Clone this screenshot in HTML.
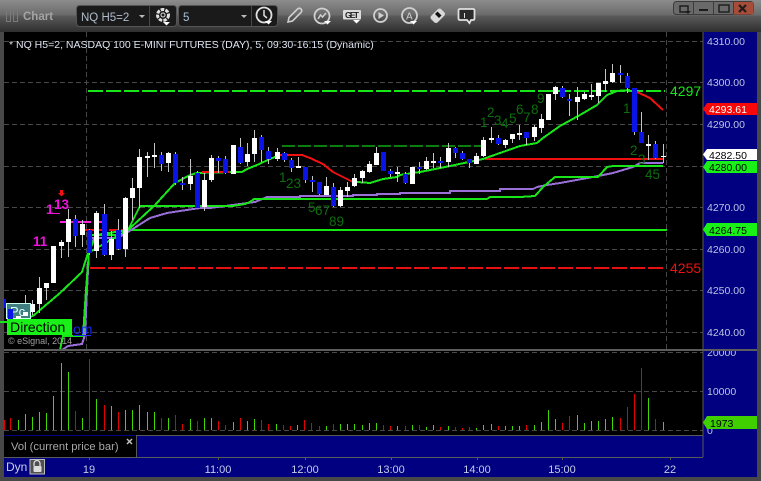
<!DOCTYPE html>
<html><head><meta charset="utf-8"><style>html,body{margin:0;padding:0;background:#444;width:761px;height:481px;overflow:hidden}svg{display:block;font-family:"Liberation Sans",sans-serif}</style></head><body>
<svg width="761" height="481" viewBox="0 0 761 481" xmlns="http://www.w3.org/2000/svg">
<defs><linearGradient id="h" x1="0" y1="0" x2="0" y2="1"><stop offset="0" stop-color="#8c8c8c"/><stop offset=".47" stop-color="#6a6a6a"/><stop offset=".5" stop-color="#5a5a5a"/><stop offset="1" stop-color="#2e2e2e"/></linearGradient></defs>
<rect width="761" height="481" fill="#484848"/>
<rect width="761" height="32" fill="url(#h)"/>
<rect x="4" y="32" width="699" height="317" fill="#000"/>
<rect x="703" y="32" width="54" height="445" fill="#000080"/>
<rect x="4" y="351" width="699" height="84" fill="#000"/>
<rect x="4" y="435" width="699" height="42" fill="#000080"/>
<rect x="4" y="436" width="132" height="21" fill="#000"/>
<!-- grid -->
<path d="M4 41.5H703M4 82.5H703M4 124.5H703M4 166.5H703M4 207.5H703M4 249.5H703M4 290.5H703M4 332.5H703M4 352.5H703M4 391.5H703M4 430.5H703M86.5 32V349M666.5 32V349" stroke="#484848" stroke-dasharray="5 3" fill="none"/>
<!-- lines -->
<g fill="none" shape-rendering="crispEdges">
<path d="M88 91H665" stroke="#19e619" stroke-width="2" stroke-dasharray="15 3"/>
<path d="M282 146H483" stroke="#0a800a" stroke-width="2" stroke-dasharray="13 3"/>
<path d="M90 268H665" stroke="#e81010" stroke-width="2" stroke-dasharray="15 3"/>
<path d="M128 230H667" stroke="#14e614" stroke-width="2"/>
<path d="M485 159H663" stroke="#f01010" stroke-width="2"/>
<path d="M60 222H102" stroke="#ff20e0" stroke-width="2" stroke-dasharray="14 3"/>
<path d="M85 230H130M92 238H100" stroke="#f01010" stroke-width="2" stroke-dasharray="9 3"/>
<path d="M90 235H117" stroke="#14e614" stroke-width="2"/>
<path d="M62 350L68 346L82 344L85 335L87 290L89 250L92 238H118L128 232L150 218L167 213L180 211L200 208H210L225 206L240 204L255 202L267 197H300V196H353V195H377V194H400V193H450V191H500V189H533L537 187L547 185L560 183L593 177L613 173L633 167L640 163H663" stroke="#9a70d8" stroke-width="2"/>
<path d="M60 350L63 336H83L86 290L89 252L96 235L128 230L140 206H197H233L245 204L250 202L254 199H487L490 197H520L535 196L543 187L555 177H598L607 167L613 166H663" stroke="#18e618" stroke-width="2"/>
<path d="M0 322H10L33 316L60 293L82 272L88 253L128 230L155 205L175 183L190 175L197 173L233 172L242 172L247 169L257 165L270 159L280 155H302L310 158L323 164L333 172L347 179L353 182L357 182L370 183L383 179L397 177L400 175L420 172L450 166L483 159L500 153L520 146L537 143L543 138L560 126L580 115L597 105L607 95L617 91L630 90" stroke="#18e618" stroke-width="2"/>
<path d="M202 172H230M280 155H302L310 158L323 164L333 172L347 179L353 182M637 92L650 98L663 110" stroke="#f01010" stroke-width="2"/>
</g>
<!-- wicks -->
<path fill="none" stroke="#c4c4c4" d="M18.5 308V330M25.5 295V320M32.5 300V315M39.5 277V313M46.5 283V300M53.5 246V283M61.5 240V258M68.5 209V257M75.5 215V247M82.5 220V247M89.5 229V255M96.5 211V258M104.5 204V256M111.5 231V260M118.5 219V250M125.5 197V257M132.5 178V220M139.5 149V208M147.5 152V177M154.5 143V168M161.5 152V171M168.5 152V172M175.5 152V185M182.5 177V190M190.5 159V190M197.5 171V208M204.5 173V211M211.5 155V182M218.5 156V173M225.5 156V174M233.5 145V174M240.5 138V164M247.5 143V166M254.5 130V162M261.5 135V162M268.5 147V164M277.5 148V161M284.5 152V162M291.5 158V172M298.5 157V168M305.5 167V183M312.5 176V192M319.5 182V195M326.5 177V195M333.5 183V207M340.5 187V207M347.5 182V197M354.5 174V187M362.5 170V183M369.5 161V173M376.5 147V165M383.5 152V171M390.5 169V177M397.5 167V182M405.5 172V184M412.5 167V184M419.5 162V174M426.5 157V170M433.5 153V168M440.5 157V168M448.5 143V167M455.5 147V158M462.5 151V160M469.5 159V168M476.5 153V164M483.5 137V157M491.5 127V143M498.5 135V145M505.5 139V148M512.5 134V143M519.5 125V140M526.5 132V145M534.5 125V141M541.5 114V133M548.5 94V120M555.5 86V100M562.5 86V98M569.5 94V116M577.5 87V120M584.5 92V100M591.5 84V100M598.5 83V103M605.5 69V92M612.5 64V83M620.5 65V83M627.5 73V93M634.5 88V135M641.5 112V143M648.5 135V160M655.5 141V159M663.5 144V163"/>
<!-- white bodies -->
<path fill="#fff" d="M16 316h5v6h-5zM23 312h5v4h-5zM30 304h5v8h-5zM37 288h5v16h-5zM44 283h5v5h-5zM51 246h5v37h-5zM59 242h5v4h-5zM66 219h5v23h-5zM80 224h5v11h-5zM94 213h5v38h-5zM109 239h5v16h-5zM123 198h5v51h-5zM130 188h5v10h-5zM137 157h5v31h-5zM145 156h5v2h-5zM152 155h5v2h-5zM166 153h5v10h-5zM188 176h5v8h-5zM202 180h5v27h-5zM209 158h5v22h-5zM231 145h5v29h-5zM245 154h5v8h-5zM252 138h5v16h-5zM275 152h5v7h-5zM296 166h5v2h-5zM324 186h5v9h-5zM338 190h5v16h-5zM345 187h5v4h-5zM352 178h5v8h-5zM360 171h5v7h-5zM367 164h5v8h-5zM374 153h5v12h-5zM395 172h5v2h-5zM410 167h5v17h-5zM424 161h5v8h-5zM431 161h5v2h-5zM446 148h5v14h-5zM474 156h5v8h-5zM481 140h5v16h-5zM489 138h5v2h-5zM503 140h5v5h-5zM510 134h5v5h-5zM517 133h5v2h-5zM532 127h5v10h-5zM539 119h5v9h-5zM546 94h5v26h-5zM553 87h5v7h-5zM575 97h5v5h-5zM582 94h5v5h-5zM589 95h5v2h-5zM596 83h5v13h-5zM603 81h5v3h-5zM610 73h5v9h-5zM646 144h5v2h-5zM661 156h5v1h-5z"/>
<!-- blue bodies -->
<path fill="#0a14e6" d="M4 299h2v9h-2zM8 308h5v14h-5zM73 219h5v17h-5zM87 230h5v23h-5zM102 214h5v41h-5zM116 230h5v19h-5zM159 155h5v9h-5zM173 154h5v29h-5zM180 183h5v2h-5zM195 173h5v35h-5zM216 158h5v3h-5zM223 159h5v14h-5zM238 147h5v16h-5zM259 137h5v13h-5zM266 151h5v8h-5zM282 153h5v7h-5zM289 160h5v8h-5zM303 167h5v13h-5zM310 180h5v2h-5zM317 182h5v12h-5zM331 187h5v19h-5zM381 152h5v19h-5zM388 171h5v3h-5zM403 174h5v9h-5zM417 167h5v2h-5zM438 161h5v2h-5zM453 148h5v5h-5zM460 153h5v6h-5zM467 159h5v4h-5zM496 138h5v6h-5zM524 132h5v6h-5zM560 88h5v9h-5zM567 99h5v2h-5zM618 73h5v2h-5zM625 76h5v12h-5zM632 88h5v44h-5zM639 132h5v11h-5zM653 144h5v14h-5z"/>
<!-- sequence numbers -->
<g fill="#0c6e0c" font-size="13.5">
<text x="279" y="182">1</text><text x="286" y="188">23</text><text x="308" y="212">5</text><text x="315" y="215">67</text><text x="329" y="226">89</text>
<text x="480" y="127">1</text><text x="487" y="117">2</text><text x="494" y="125">3</text><text x="501" y="128">4</text><text x="509" y="123">5</text><text x="516" y="114">6</text><text x="523" y="122">7</text><text x="531" y="114">8</text><text x="537" y="103">9</text>
<text x="623" y="113">1</text><text x="630" y="155">2</text><text x="638" y="164">3</text><text x="645" y="179">45</text>
</g>
<g fill="#f010e0" font-size="13.5" font-weight="bold"><text x="46" y="214">1</text><text x="54" y="209">13</text><text x="33" y="246">11</text></g>
<path d="M53 213.500H60" stroke="#f010e0"/>
<path d="M60 190h3v3h2l-3.500 3.500l-3.500-3.500h2z" fill="#f01010"/>
<text x="670" y="96" fill="#18e618" font-size="14">4297</text>
<text x="670" y="273" fill="#f01010" font-size="14">4255</text>
<text x="9" y="48" fill="#dde4f0" font-size="10.5">* NQ H5=2, NASDAQ 100 E-MINI FUTURES (DAY), 5, 09:30-16:15 (Dynamic)</text>
<!-- overlay left -->
<rect x="6.500" y="303.500" width="24" height="15" fill="#3f7f80" stroke="#cfe" stroke-width="1"/>
<text x="10" y="316" fill="#dff" font-size="13">Pc</text>
<rect x="8" y="309" width="5" height="13" fill="#0a14e6"/><rect x="16" y="316" width="5" height="6" fill="#fff"/><rect x="23" y="312" width="5" height="4" fill="#fff"/>
<rect x="7" y="319" width="65" height="16" fill="#18f018"/>
<text x="10" y="332" fill="#000" font-size="14">Direction</text>
<text x="73" y="334" fill="#1a28f0" font-size="14">om</text><path d="M73 335.500H91" stroke="#1a28f0"/>
<text x="8" y="344" fill="#a0a0a0" font-size="9">© eSignal, 2014</text>
<!-- price axis -->
<path d="M703 32V457" stroke="#5a5a5a" stroke-width="1"/>
<g fill="#bcc4e4" font-size="10.500"><text x="707" y="45">4310.00</text><text x="707" y="86">4300.00</text><text x="707" y="128">4290.00</text><text x="707" y="211">4270.00</text><text x="707" y="253">4260.00</text><text x="707" y="294">4250.00</text><text x="707" y="336">4240.00</text><text x="707" y="356">20000</text><text x="707" y="395">10000</text><text x="707" y="434">0</text></g>
<path d="M703 109l4-6h50v12h-50z" fill="#f80808"/><text x="709" y="113" fill="#fff" font-size="10.500">4293.61</text>
<path d="M703 154.500l4-5.500h50v11h-50z" fill="#fff"/><text x="709" y="159" fill="#000" font-size="10.500">4282.50</text>
<path d="M703 167l4-6h50v12h-50z" fill="#18f018"/><text x="709" y="171" fill="#000" font-size="10.500">4280.00</text>
<path d="M703 229.500l4-6.500h50v13h-50z" fill="#18f018"/><text x="709" y="234" fill="#000" font-size="10.500">4264.75</text>
<path d="M703 422.500l4-6.500h50v13h-50z" fill="#40d000"/><text x="710" y="427" fill="#000" font-size="10.500">1973</text>
<!-- vol bars -->
<path fill="none" stroke="#40d800" d="M18.500 430V420M25.500 430V414M32.500 430V417M39.500 430V412M46.500 430V413M53.500 430V396M61.500 430V363M68.500 430V372M82.500 430V418M96.500 430V399M111.500 430V406M125.500 430V410M132.500 430V410M139.500 430V405M147.500 430V412M154.500 430V412M168.500 430V418M190.500 430V419M204.500 430V418M211.500 430V418M233.500 430V422M247.500 430V421M254.500 430V419M276.500 430V424M297.500 430V425M326.500 430V426M340.500 430V424M347.500 430V424M354.500 430V424M362.500 430V425M369.500 430V423M376.500 430V423M397.500 430V426M412.500 430V425M426.500 430V427M433.500 430V425M448.500 430V426M476.500 430V428M483.500 430V425M491.500 430V424M505.500 430V426M512.500 430V426M519.500 430V426M534.500 430V425M541.500 430V422M548.500 430V410M555.500 430V419M577.500 430V415M584.500 430V423M591.500 430V421M598.500 430V421M605.500 430V419M612.500 430V417M648.500 430V398M663.500 430V422"/>
<path fill="none" stroke="#e00000" d="M4.500 430V420M10.500 430V418M75.500 430V411M89.500 430V359M104.500 430V405M118.500 430V412M161.500 430V418M175.500 430V415M182.500 430V424M197.500 430V421M218.500 430V421M225.500 430V425M240.500 430V418M261.500 430V420M268.500 430V424M283.500 430V425M290.500 430V426M304.500 430V420M311.500 430V423M319.500 430V426M333.500 430V424M383.500 430V425M390.500 430V426M405.500 430V426M419.500 430V425M440.500 430V427M455.500 430V427M462.500 430V428M469.500 430V427M498.500 430V426M526.500 430V425M562.500 430V423M569.500 430V416M620.500 430V418M627.500 430V407M634.500 430V394M641.500 430V368M655.500 430V419"/>
<!-- separators -->
<rect x="4" y="349" width="753" height="2" fill="#5c5c5c"/>
<path d="M136 435.500H703M4 457.500H703M136.500 436V457M89.500 457V460M218.500 457V460M305.500 457V460M391.500 457V460M477.500 457V460M562.500 457V460M670.500 457V460" stroke="#5a5a5a" fill="none"/>
<text x="11" y="450" fill="#a8a8a8" font-size="11.200">Vol (current price bar)</text>
<path d="M127 439l5 5M132 439l-5 5" stroke="#c0c0c0" stroke-width="1.500"/>
<g fill="#c4cce8" font-size="11" text-anchor="middle"><text x="89" y="473">19</text><text x="218" y="473">11:00</text><text x="305" y="473">12:00</text><text x="391" y="473">13:00</text><text x="477" y="473">14:00</text><text x="562" y="473">15:00</text><text x="670" y="473">22</text></g>
<text x="6" y="471" fill="#c8d0e8" font-size="12">Dyn</text>
<rect x="30" y="459.500" width="14.500" height="14.500" fill="#505050" stroke="#bbb"/>
<path d="M34 466v-2.500a3 3 0 0 1 6 0V466" stroke="#ddd" fill="none" stroke-width="1.300"/><rect x="33.500" y="466" width="8" height="6" rx="1" fill="#ddd"/>
<!-- toolbar -->
<path d="M6.500 8.500h4v13h-4zM13.500 8.500h4v13h-4z" fill="none" stroke="#7a7a7a"/>
<text x="23" y="20" fill="#a4a4a4" font-size="11.500" font-weight="bold">Chart</text>
<rect x="76.500" y="5.500" width="100" height="21" rx="3" fill="#1a1a1a" stroke="#555"/>
<rect x="178.500" y="5.500" width="99" height="21" rx="3" fill="#1a1a1a" stroke="#555"/>
<path d="M149.500 6V26M251.500 6V26" stroke="#484848"/>
<text x="81" y="21" fill="#b0bccc" font-size="11.500">NQ H5=2</text>
<text x="183" y="21" fill="#a8c0d8" font-size="11.500">5</text>
<path d="M139 15h6l-3 3zM241 15h6l-3 3z" fill="#bbb"/>
<!-- gear -->
<g fill="none" stroke="#e0e0e0"><circle cx="163" cy="15" r="5.500" stroke-width="3" stroke-dasharray="3.500 1.200"/><circle cx="163" cy="15" r="2" fill="#1a1a1a" stroke-width="1"/></g>
<path d="M163 22h7l-3.500 3.500z" fill="#fff"/>
<!-- clock -->
<circle cx="264" cy="15" r="7.500" fill="none" stroke="#e0e0e0" stroke-width="1.800"/><path d="M264 10v5.500l3 2.500" fill="none" stroke="#e0e0e0" stroke-width="1.500"/><path d="M265 21h7l-3.500 3.500z" fill="#fff"/>
<!-- pencil -->
<path d="M288 22l1-4.500l8.500-8.500q2-1.500 3.500 0t0 3.500l-8.500 8.500z" fill="none" stroke="#cfcfcf" stroke-width="1.600"/>
<!-- gauge -->
<circle cx="322" cy="16" r="7.500" fill="none" stroke="#d0d0d0" stroke-width="1.800"/><path d="M318 19l2.500-4l2 2l3.500-4" fill="none" stroke="#d0d0d0" stroke-width="1.500"/><path d="M324 21h7l-3.500 3.500z" fill="#fff"/>
<!-- GET -->
<rect x="343" y="10" width="18" height="9.500" rx="1" fill="#dcdcdc"/><text x="345" y="18" fill="#222" font-size="8.500" font-weight="bold" textLength="14">GET</text><path d="M353 20h7l-3.500 3.500z" fill="#fff"/>
<!-- play -->
<circle cx="380.500" cy="15.500" r="6.500" fill="none" stroke="#d0d0d0" stroke-width="1.800"/><path d="M378.500 12l5.500 3.500l-5.500 3.500z" fill="#d0d0d0"/>
<!-- A -->
<circle cx="409.500" cy="15.500" r="7.500" fill="none" stroke="#d0d0d0" stroke-width="1.800"/><text x="406" y="19.500" fill="#d0d0d0" font-size="10">A</text><path d="M410 21h7l-3.500 3.500z" fill="#fff"/>
<!-- diamond -->
<path d="M431 16l7-7q1.500-1 3 0l3.500 3.500q1 1.500 0 3l-7 7q-1.500 1-3 0l-3.500-3.500q-1-1.500 0-3z" fill="#d8d8d8"/><path d="M435 14l4 4l2.500-2.500l-4-4z" fill="#111"/>
<!-- bubble -->
<path d="M460 9h13q1.500 0 1.500 1.500v8q0 1.500-1.500 1.500h-2l-1.500 3l-2.500-3h-7q-1.500 0-1.500-1.500v-8q0-1.500 1.500-1.500z" fill="#2a2a2a" stroke="#e0e0e0" stroke-width="1.800"/><path d="M464.500 13v5" stroke="#e0e0e0"/>
<!-- window buttons -->
<rect x="673.500" y="1.500" width="80" height="13" rx="3" fill="#6a6a6a" stroke="#3c3c3c"/>
<path d="M733 2h18.500q2 0 2 2v8.500q0 2-2 2H733z" fill="#a84c3a"/>
<path d="M693.500 2V14M713.500 2V14M733.500 2V14" stroke="#3c3c3c"/>
<path d="M680 6h8v6h-8z" fill="none" stroke="#1c1c1c" stroke-width="1.400"/><path d="M685 11h6l-3 3z" fill="#1c1c1c"/>
<rect x="699" y="9" width="9" height="2" fill="#1c1c1c"/>
<rect x="719" y="5" width="10" height="7" fill="none" stroke="#1c1c1c" stroke-width="1.400"/>
<path d="M739 5l7 7M746 5l-7 7" stroke="#1c1c1c" stroke-width="2.200"/>
</svg>
</body></html>
